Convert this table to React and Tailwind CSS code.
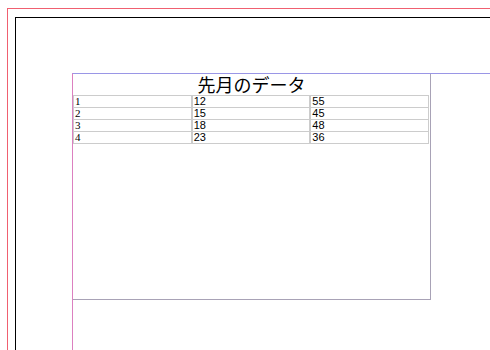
export default function App() {
  const rows = [
    ["1", "12", "55"],
    ["2", "15", "45"],
    ["3", "18", "48"],
    ["4", "23", "36"],
  ];
  return (
    <div className="w-[490px] h-[350px] overflow-hidden bg-white pt-[8px] pl-[7px]">
      {/* page margin guide */}
      <div className="h-full border-t border-l border-[#f06070] pt-[8px] pl-[7px]">
        {/* page edge */}
        <div className="h-full border-t border-l border-black pt-[55px] pl-[56px]">
          {/* frame guides */}
          <div className="h-full border-t border-l border-t-[#9a96e6] border-l-[#dc80c0]">
            <div className="w-[358px] h-[226px] border-r border-b border-[#a8a2b6] flex flex-col">
              <div
                className="h-[21px] text-center text-[18px] leading-[21px] text-black"
                style={{ fontFamily: '"Noto Sans CJK JP", sans-serif' }}
              >
                先月のデータ
              </div>
              <div className="w-[356px] grid grid-cols-3">
                {rows.map((r, i) =>
                  r.map((v, j) => (
                    <div
                      key={`${i}-${j}`}
                      className={`border-l border-r border-b border-[#cccccc] ${
                        i === 0 ? "border-t h-[13px]" : "h-[12px]"
                      } pl-[1px] text-black text-[11px] leading-[11px]`}
                      style={{
                        fontFamily:
                          j === 0 ? '"Liberation Serif", serif' : '"Liberation Sans", sans-serif',
                      }}
                    >
                      {v}
                    </div>
                  ))
                )}
              </div>
            </div>
          </div>
        </div>
      </div>
    </div>
  );
}
